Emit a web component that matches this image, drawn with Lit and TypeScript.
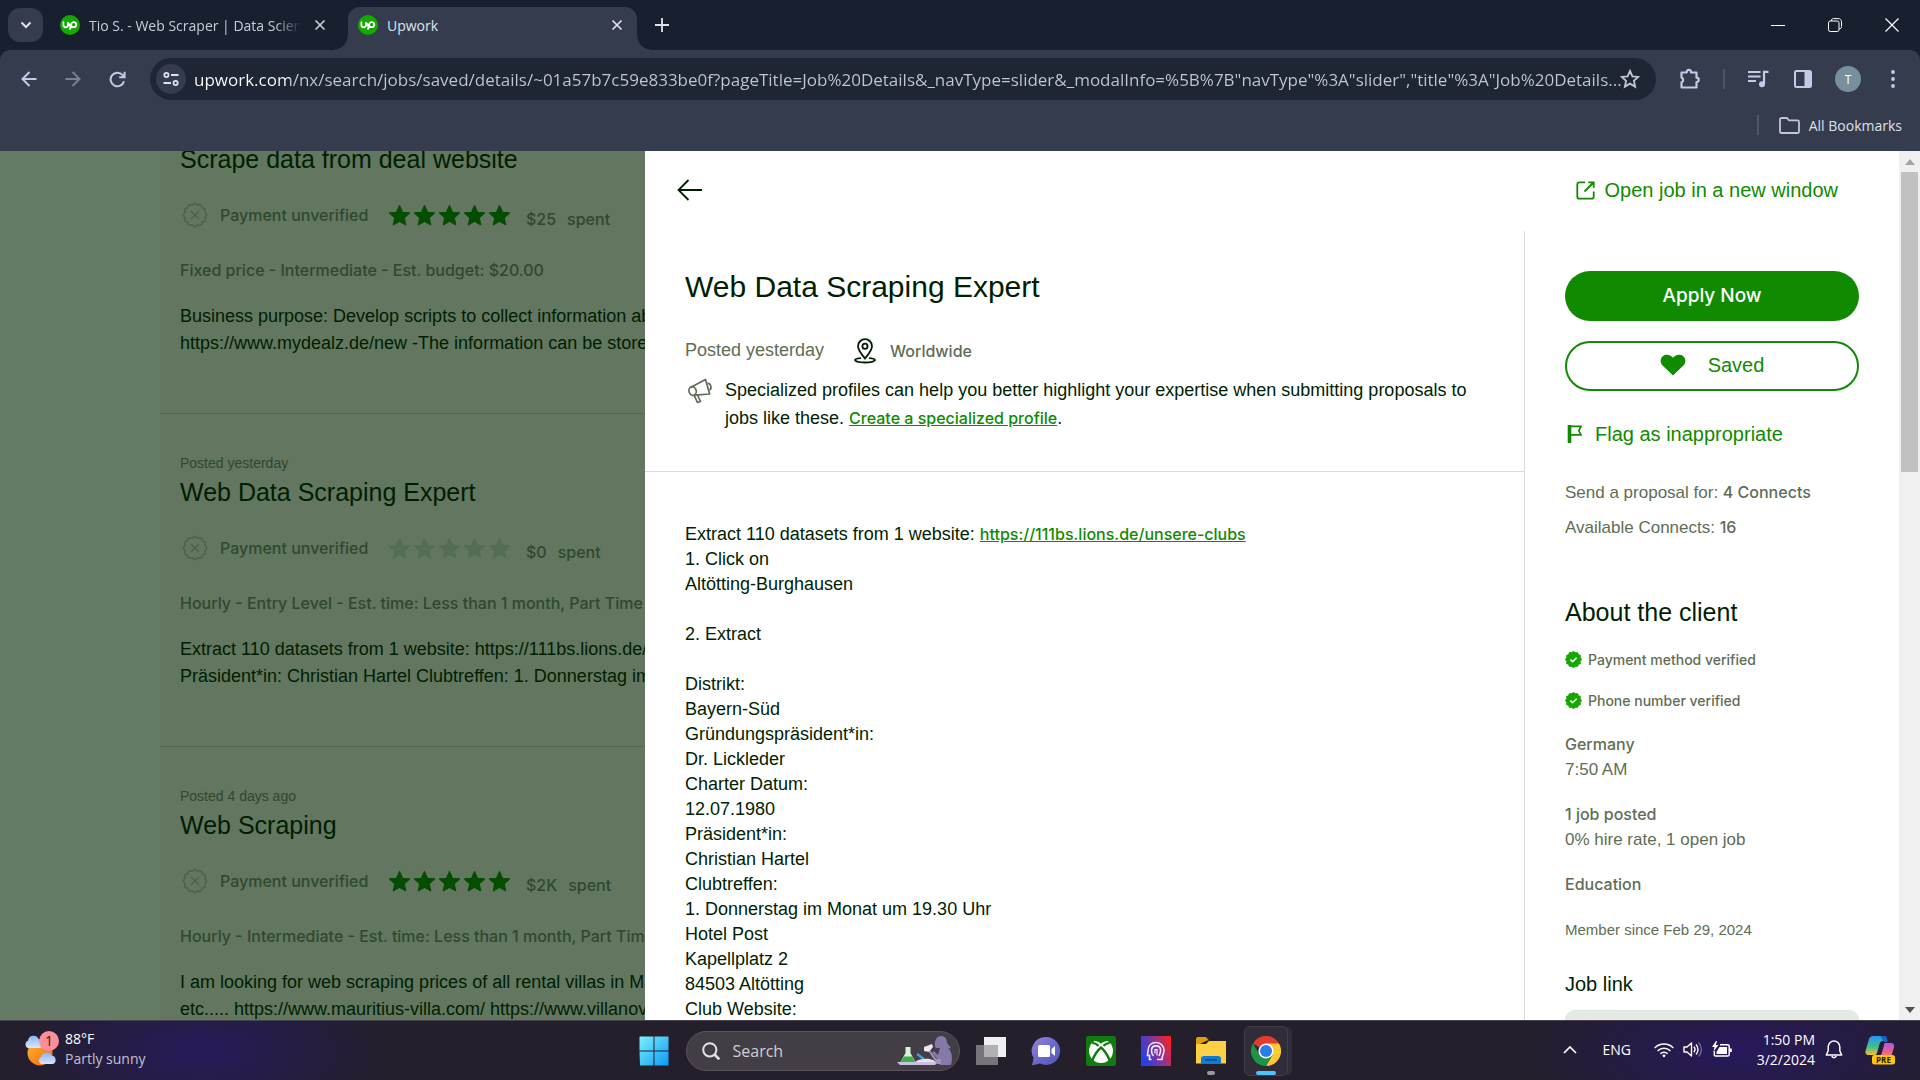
import { LitElement, html, css, nothing } from "lit";
import { customElement } from "lit/decorators.js";
import { classMap } from "lit/directives/class-map.js";

interface Job {
  posted: string;
  title: string;
  rated: boolean;
  spent: string;
  meta: string;
  lines: string[];
}

const JOBS: Job[] = [
  {
    posted: "",
    title: "Scrape data from deal website",
    rated: true,
    spent: "$25",
    meta: "Fixed price - Intermediate - Est. budget: $20.00",
    lines: [
      "Business purpose: Develop scripts to collect information about",
      "https://www.mydealz.de/new -The information can be stored",
    ],
  },
  {
    posted: "Posted yesterday",
    title: "Web Data Scraping Expert",
    rated: false,
    spent: "$0",
    meta: "Hourly - Entry Level - Est. time: Less than 1 month, Part Time",
    lines: [
      "Extract 110 datasets from 1 website: https://111bs.lions.de/unsere-clubs",
      "Präsident*in: Christian Hartel Clubtreffen: 1. Donnerstag im Monat",
    ],
  },
  {
    posted: "Posted 4 days ago",
    title: "Web Scraping",
    rated: true,
    spent: "$2K",
    meta: "Hourly - Intermediate - Est. time: Less than 1 month, Part Time",
    lines: [
      "I am looking for web scraping prices of all rental villas in Mauritius",
      "etc..... https://www.mauritius-villa.com/ https://www.villanovo.com",
    ],
  },
];

const DESCRIPTION = [
  "1. Click on",
  "Altötting-Burghausen",
  "",
  "2. Extract",
  "",
  "Distrikt:",
  "Bayern-Süd",
  "Gründungspräsident*in:",
  "Dr. Lickleder",
  "Charter Datum:",
  "12.07.1980",
  "Präsident*in:",
  "Christian Hartel",
  "Clubtreffen:",
  "1. Donnerstag im Monat um 19.30 Uhr",
  "Hotel Post",
  "Kapellplatz 2",
  "84503 Altötting",
  "Club Website:",
];

const URL_TEXT =
  'upwork.com/nx/search/jobs/saved/details/~01a57b7c59e833be0f?pageTitle=Job%20Details&_navType=slider&_modalInfo=%5B%7B"navType"%3A"slider","title"%3A"Job%20Details...';

const scallop = (r: number, depth: number, c: number, n: number) => {
  let d = "";
  for (let i = 0; i <= n * 8; i++) {
    const a = (i / (n * 8)) * Math.PI * 2;
    const k = r + depth * Math.cos(a * n);
    d += `${i ? "L" : "M"}${(c + k * Math.sin(a)).toFixed(2)} ${(c - k * Math.cos(a)).toFixed(2)}`;
  }
  return d + "Z";
};

const favicon = html`<svg width="20" height="20" viewBox="0 0 20 20" aria-hidden="true">
  <circle cx="10" cy="10" r="10" fill="#14a800" />
  <g fill="none" stroke="#fff" stroke-width="1.7" stroke-linecap="round">
    <path d="M3.4 7.2v2.900a2.300 2.300 0 0 0 4.600 0V7.200c1 2.500 2 4 3.300 5.200" />
    <path d="M10 14l1.300-4.800a2.500 2.500 0 1 1 2.500 3c-1.700 0-3-1.300-4-3" />
  </g>
</svg>`;

const closeX = html`<svg width="12" height="12" viewBox="0 0 12 12" aria-hidden="true">
  <path d="M1.500 1.500l9 9M10.500 1.500l-9 9" stroke="currentColor" stroke-width="1.700" fill="none" />
</svg>`;

const star = html`<svg width="23" height="23" viewBox="0 0 24 24" aria-hidden="true">
  <path
    d="M12 1.800l3 6.900 7.300.7-5.500 5 1.600 7.200L12 17.900l-6.400 3.700 1.600-7.200-5.500-5 7.300-.7z"
    fill="currentColor" stroke="currentColor" stroke-width="1.400" stroke-linejoin="round" />
</svg>`;

const unverified = html`<svg width="26" height="26" viewBox="0 0 26 26" aria-hidden="true">
  <path d=${scallop(11, 0.6, 13, 12)} fill="none" stroke="currentColor" stroke-width="1.500" />
  <path d="M9 9l8 8M17 9l-8 8" stroke="currentColor" stroke-width="1.500" />
</svg>`;

const verified = html`<svg width="17" height="17" viewBox="0 0 17 17" aria-hidden="true">
  <path d=${scallop(7.9, 0.5, 8.5, 12)} fill="#14a800" />
  <path d="M5.400 8.700l2.200 2 4-3.900" fill="none" stroke="#fff" stroke-width="1.600" />
</svg>`;

@customElement("app-root")
export class AppRoot extends LitElement {
  static styles = css`
    :host {
      display: flex;
      flex-direction: column;
      height: 100vh;
      overflow: hidden;
      font-family: "Liberation Sans", Arial, sans-serif;
      font-size: 17px;
      color: #001e00;
      background: #fff;
    }
    * { box-sizing: border-box; }
    svg { display: block; flex: none; }
    h1, h2, h3, p { margin: 0; font-weight: 400; }
    button { border: 0; padding: 0; background: none; color: inherit; font: inherit; cursor: pointer; }
    .medium { font-family: Inter, "Liberation Sans", sans-serif; font-weight: 500; font-size: 16px; }

    /* browser frame */
    .browser { flex: none; background: #182030; color: #dfe3ee; font: 14px "Open Sans", "Noto Sans", sans-serif; }
    .tabs { display: flex; align-items: center; height: 50px; padding-left: 8px; }
    .tabsearch { display: grid; place-items: center; width: 35px; height: 34px; border-radius: 12px; background: #343c4d; }
    .tab { display: flex; align-items: center; gap: 9px; width: 289px; height: 43px; margin-top: 7px; padding: 0 10px 7px; }
    .tab.idle { margin-left: 7px; padding-right: 9px; color: #c6ccda; }
    .tab.active { position: relative; margin-left: 9px; background: #343c4d; border-radius: 12px 12px 0 0; }
    .tab.active::before, .tab.active::after { content: ""; position: absolute; bottom: 0; width: 14px; height: 14px; }
    .tab.active::before { right: 100%; background: radial-gradient(circle at 0 0, transparent 13px, #343c4d 14px); }
    .tab.active::after { left: 100%; background: radial-gradient(circle at 100% 0, transparent 13px, #343c4d 14px); }
    .tabtitle { flex: 1; min-width: 0; overflow: hidden; white-space: nowrap; }
    .idle .tabtitle { -webkit-mask-image: linear-gradient(to right, #000 88%, transparent); mask-image: linear-gradient(to right, #000 88%, transparent); }
    .tabclose { display: grid; place-items: center; width: 20px; height: 20px; }
    .newtab { display: grid; place-items: center; width: 30px; height: 30px; margin-left: 10px; }
    .winbuttons { display: flex; margin-left: auto; color: #fff; }
    .winbuttons button { display: grid; place-items: center; width: 57px; height: 48px; }
    .toolbar { display: flex; align-items: center; height: 58px; padding: 0 19px 0 13px; background: #343c4d; border-radius: 10px 10px 0 0; color: #c5cae9; }
    .nav { display: flex; gap: 12px; margin-right: 17px; }
    .nav button, .actions button { display: grid; place-items: center; width: 32px; height: 32px; }
    .nav .off { color: #7b8192; }
    .omnibox { display: flex; flex: 1; align-items: center; height: 42px; padding: 0 16px 0 6px; border-radius: 21px; background: #1e2636; }
    .site { display: grid; place-items: center; width: 30px; height: 30px; border-radius: 15px; background: #343c4d; color: #dfe3ee; }
    .url { flex: 1; min-width: 0; height: 32px; padding: 0; margin: 0 -4px 0 8px; border: 0; outline: 0; font: 17px "Open Sans", "Noto Sans", sans-serif; background: linear-gradient(to right, #fff 96px, #c3c7d0 96px); -webkit-background-clip: text; background-clip: text; -webkit-text-fill-color: transparent; }
    .actions { display: flex; align-items: center; margin-left: 18px; gap: 13px; }
    .actions .rule { width: 2px; height: 20px; margin: 0 4px; background: #4d566b; }
    .avatar { display: grid; place-items: center; width: 26px; height: 26px; border-radius: 13px; background: #78909c; color: #fff; font-size: 12px; }
    .actions .more { margin-right: -8px; }
    .bookmarks { display: flex; align-items: center; justify-content: flex-end; gap: 10px; height: 43px; padding: 0 18px 9px 0; background: #343c4d; color: #dfe1e8; }
    .bookmarks .rule { width: 2px; height: 20px; margin-right: 10px; background: #4d566b; }
    .bookmarks button { display: flex; align-items: center; gap: 9px; }

    /* page */
    .page { display: grid; grid-template-columns: 645fr 1275fr; flex: 1; min-height: 0; }
    .behind { overflow: hidden; min-width: 0; padding-left: 160px; background: #667b66; }
    .list { margin-top: -71px; background: #627660; }
    .card { padding: 39px 0 56px 20px; border-top: 1px solid #566b55; white-space: nowrap; color: #001e00; }
    .posted { min-height: 20px; font-size: 14px; line-height: 20px; color: #2f492e; }
    .card h2 { font-size: 25px; line-height: 38px; }
    .facts { display: flex; align-items: center; height: 36px; margin-top: 19px; color: #2f492e; }
    .facts svg { color: #4a644a; }
    .facts .pay { margin-left: 12px; width: 153px; margin-right: 15px; }
    .badge { padding-left: 2px; }
    .stars { display: flex; gap: 2px; }
    .stars svg { color: #054d00; }
    .stars.none svg { color: #546e54; }
    .money { display: flex; gap: 11px; margin-left: 15px; padding-top: 7px; }
    .meta { margin-top: 24px; line-height: 27px; color: #2f492e; }
    .desc { margin-top: 19px; font-size: 18px; line-height: 27px; }

    .slider { display: grid; grid-template-columns: 1fr 21px; min-width: 0; min-height: 0; background: #fff; }
    .sheet { display: flex; flex-direction: column; min-width: 0; min-height: 0; overflow: hidden; }
    .sheethead { display: flex; flex: none; align-items: center; justify-content: space-between; height: 80px; padding: 0 61px 2px 32px; }
    a { color: #108a00; }
    .open { display: flex; align-items: center; gap: 10px; font-size: 20px; text-decoration: none; }
    .columns { display: grid; grid-template-columns: 1fr 375px; flex: 1; min-height: 0; }
    .job { min-width: 0; }
    .jobhead { padding: 36px 40px 39px; border-bottom: 1px solid #d5e0d5; }
    .jobhead h1 { font-size: 30px; line-height: 40px; }
    .where { display: flex; align-items: center; height: 36px; margin-top: 25px; font-size: 18px; color: #5e6d55; }
    .where .pin { margin: 2px 12px 0 28px; color: #001e00; }
    .where .medium { padding-top: 2px; }
    .notice { display: flex; gap: 11px; margin-top: 8px; font-size: 18px; line-height: 28px; color: #001e00; }
    .notice svg { margin: 2px 0 0 2px; color: #5e6d55; }
    .body { padding: 50px 40px 0; font-size: 18px; line-height: 25px; }
    .body p { min-height: 25px; }
    .side { padding: 40px 40px 0; border-left: 1px solid #d5e0d5; color: #5e6d55; line-height: 25px; }
    .apply, .saved { display: flex; align-items: center; justify-content: center; width: 100%; height: 50px; padding-bottom: 2px; border-radius: 25px; font-size: 20px; }
    .apply { background: #108a00; color: #fff; font-family: Inter, sans-serif; font-weight: 500; font-size: 19px; }
    .saved { gap: 22px; margin-top: 20px; border: 2px solid #108a00; color: #108a00; }
    .flag { display: flex; align-items: center; gap: 12px; height: 30px; margin-top: 28px; font-size: 20px; color: #108a00; }
    .connects { margin-top: 31px; }
    .available { margin-top: 10px; }
    .side h2 { margin-top: 55px; font-size: 25px; line-height: 35px; color: #001e00; }
    .check { display: flex; align-items: center; gap: 6px; height: 24px; margin-top: 17px; }
    .check .medium { font-size: 14px; }
    .fact { margin-top: 20px; }
    .since { margin-top: 23px; line-height: 20px; font-size: 15px; }
    .side h3 { margin-top: 30px; font-size: 20px; line-height: 28px; color: #001e00; }
    .link { width: 100%; height: 48px; margin-top: 12px; border: 1px solid #dbe5db; border-radius: 10px; background: #e4ebe4; }
    .scroll { display: flex; flex-direction: column; align-items: center; background: #f0f0f0; }
    .scroll .thumb { width: 17px; height: 300px; background: #c1c1c1; }
    .scroll svg { margin: 8px 0 7px; }
    .scroll .down { margin-top: auto; }

    /* taskbar */
    .taskbar { display: flex; flex: none; height: 60px; border-top: 1px solid #45424f; color: #fff; font: 14px/20px "Open Sans", "Noto Sans", sans-serif;
      background: radial-gradient(ellipse 200px 90px at 200px 30px, #271a5a, transparent), radial-gradient(ellipse 230px 90px at 1740px 30px, #28185c, transparent), #241f2a; }
    .weather { display: flex; flex: 1; align-items: center; gap: 6px; padding: 0 0 4px 24px; text-align: left; }
    .weather .sky { color: #c4c1cf; }
    .apps { display: flex; align-items: center; padding-left: 6px; }
    .apps button { position: relative; display: grid; place-items: center; width: 55px; height: 50px; }
    .apps .start { width: 30px; margin-right: 17px; }
    .search { display: flex; align-items: center; width: 274px; height: 40px; margin-right: 4px; padding: 0 6px 0 15px; border: 1px solid #5a525d; border-radius: 20px; background: #433e46; }
    .search input { flex: 1; min-width: 0; margin-left: 11px; padding: 0 2px; border: 0; outline: 0; background: none; color: #fff; font: 16px "Open Sans", sans-serif; }
    .search input::placeholder { color: #d0cdd3; opacity: 1; }
    .apps .front { width: 44px; margin-left: 5px; border: 1px solid #413d49; border-radius: 6px; background: #302c38; box-shadow: 5px 0 0 -1px #302c38; }
    .mark { position: absolute; bottom: 1px; width: 8px; height: 4px; border-radius: 2px; background: #9b98a0; }
    .front .mark { bottom: 0; width: 20px; background: #4cc2ff; }
    .tray { display: flex; flex: 1; align-items: center; justify-content: flex-end; padding: 0 24px 2px 0; }
    .tray .lang { margin: 0 23px 0 26px; }
    .tray .status { display: flex; align-items: center; gap: 9px; }
    .clock { width: 74px; margin: 0 10px 0 9px; white-space: nowrap; display: flex; flex-direction: column; align-items: flex-end; }
    .tray .copilot { margin-left: 22px; }
  `;

  private card(j: Job) {
    return html`<article class="card">
      <p class="posted">${j.posted || nothing}</p>
      <h2>${j.title}</h2>
      <div class="facts medium">
        <span class="badge">${unverified}</span>
        <span class="pay">Payment unverified</span>
        <span class=${classMap({ stars: true, none: !j.rated })}>${[1, 2, 3, 4, 5].map(() => star)}</span>
        <span class="money"><span>${j.spent}</span><span>spent</span></span>
      </div>
      <p class="meta medium">${j.meta}</p>
      <div class="desc">${j.lines.map((l) => html`<p>${l}</p>`)}</div>
    </article>`;
  }

  private browser() {
    return html`<header class="browser">
      <div class="tabs">
        <button class="tabsearch" aria-label="Search tabs">
          <svg width="12" height="8" viewBox="0 0 12 8"><path d="M1.500 1.500L6 6l4.500-4.500" fill="none" stroke="currentColor" stroke-width="2" /></svg>
        </button>
        <div class="tab idle">${favicon}<span class="tabtitle">Tio S. - Web Scraper | Data Scientist</span><button class="tabclose" aria-label="Close tab">${closeX}</button></div>
        <div class="tab active">${favicon}<span class="tabtitle">Upwork</span><button class="tabclose" aria-label="Close tab">${closeX}</button></div>
        <button class="newtab" aria-label="New tab">
          <svg width="14" height="14" viewBox="0 0 14 14"><path d="M7 0v14M0 7h14" stroke="currentColor" stroke-width="1.800" /></svg>
        </button>
        <div class="winbuttons">
          <button aria-label="Minimize"><svg width="14" height="14" viewBox="0 0 14 14"><path d="M0 7.500h14" stroke="currentColor" /></svg></button>
          <button aria-label="Restore"><svg width="14" height="14" viewBox="0 0 14 14" fill="none" stroke="currentColor"><rect x=".5" y="3" width="10.500" height="10.500" rx="1.800" /><path d="M3.200 3C3.200 1.500 4 .6 5.500.6h4.700c2 0 3.300 1.300 3.300 3.300v4.700c0 1.500-.9 2.300-2.400 2.300" /></svg></button>
          <button aria-label="Close"><svg width="14" height="14" viewBox="0 0 14 14"><path d="M.5.5l13 13M13.500.5l-13 13" stroke="currentColor" stroke-width="1.200" /></svg></button>
        </div>
      </div>
      <div class="toolbar">
        <div class="nav">
          <button aria-label="Back"><svg width="16" height="16" viewBox="0 0 16 16" fill="none" stroke="currentColor" stroke-width="2"><path d="M15.500 8H2M8.500 1L1.500 8l7 7" /></svg></button>
          <button class="off" aria-label="Forward"><svg width="16" height="16" viewBox="0 0 16 16" fill="none" stroke="currentColor" stroke-width="2"><path d="M.5 8H14M7.500 1l7 7-7 7" /></svg></button>
          <button aria-label="Reload"><svg width="17" height="17" viewBox="0 0 17 17" fill="none" stroke="currentColor" stroke-width="2"><path d="M15 10.200A6.800 6.800 0 1 1 13.500 3.900L15.500 6M15.600.8V6.200H10.200" /></svg></button>
        </div>
        <div class="omnibox">
          <span class="site"><svg width="16" height="14" viewBox="0 0 16 14" fill="none" stroke="currentColor" stroke-width="1.800"><circle cx="3.400" cy="3" r="2.100" /><path d="M8 3h7.500M.5 11H8" /><circle cx="12.600" cy="11" r="2.100" /></svg></span>
          <input class="url" type="text" aria-label="Address" .value=${URL_TEXT} />
          <button aria-label="Bookmark this page"><svg width="20" height="20" viewBox="0 0 20 20"><path d="M10 1.900l2.400 5.400 5.900.6-4.400 3.900 1.200 5.800-5.100-3-5.100 3 1.200-5.800L1.700 7.900l5.900-.6z" fill="none" stroke="#c3c7d0" stroke-width="1.800" /></svg></button>
        </div>
        <div class="actions">
          <button aria-label="Extensions"><svg width="22" height="22" viewBox="0 0 22 22"><path d="M2.500 4.500h5.200a2.200 2.200 0 1 1 4.300 0h5.500v5.200a2.200 2.200 0 1 1 0 4.400v5.400h-15v-5.300a2.400 2.400 0 0 0 0-4.600z" fill="none" stroke="currentColor" stroke-width="2.200" stroke-linejoin="round" /></svg></button>
          <span class="rule"></span>
          <button aria-label="Media controls"><svg width="21" height="18" viewBox="0 0 21 18"><path d="M0 2h12.500M0 6.500h12.500M0 11h8" stroke="currentColor" stroke-width="2" /><path d="M16 14V1.800h4.500" fill="none" stroke="currentColor" stroke-width="2.200" /><circle cx="14" cy="14.200" r="3" fill="currentColor" /></svg></button>
          <button aria-label="Side panel"><svg width="18" height="18" viewBox="0 0 18 18"><rect x="1" y="1" width="16" height="16" rx="1.500" fill="none" stroke="currentColor" stroke-width="2" /><path d="M10.500 1H17v16h-6.500z" fill="currentColor" /></svg></button>
          <button aria-label="Profile"><span class="avatar">T</span></button>
          <button class="more" aria-label="Menu"><svg width="4" height="18" viewBox="0 0 4 18" fill="currentColor"><circle cx="2" cy="2" r="1.900" /><circle cx="2" cy="9" r="1.900" /><circle cx="2" cy="16" r="1.900" /></svg></button>
        </div>
      </div>
      <div class="bookmarks">
        <span class="rule"></span>
        <button><svg width="21" height="17" viewBox="0 0 21 17"><path d="M1 2.500C1 1.700 1.700 1 2.500 1h5.300l2.200 2.400h8.500c.8 0 1.500.7 1.500 1.500v9.600c0 .8-.7 1.500-1.500 1.500h-16C1.700 16 1 15.300 1 14.500z" fill="none" stroke="#c3c7d0" stroke-width="1.800" /></svg>All Bookmarks</button>
      </div>
    </header>`;
  }

  private slider() {
    return html`<section class="slider">
      <div class="sheet">
        <div class="sheethead">
          <button aria-label="Go back"><svg width="26" height="24" viewBox="0 0 26 24"><path d="M25 12H1.500M11.500 2L1.500 12l10 10" fill="none" stroke="#001e00" stroke-width="1.800" /></svg></button>
          <a class="open" href="#job"><svg width="19" height="19" viewBox="0 0 19 19" fill="none" stroke="#108a00" stroke-width="1.800"><path d="M9 1.300H3.200c-1.200 0-1.900.7-1.900 1.900v12.600c0 1.200.7 1.900 1.900 1.900h12.600c1.200 0 1.900-.7 1.900-1.900V10.500" /><path d="M12.300 1.300h5.400v5.400M17.500 1.500L8.500 10.500" /></svg>Open job in a new window</a>
        </div>
        <div class="columns">
          <div class="job">
            <div class="jobhead">
              <h1>Web Data Scraping Expert</h1>
              <div class="where">
                <span>Posted yesterday</span>
                <svg class="pin" width="26" height="26" viewBox="0 0 26 26" fill="none" stroke="currentColor" stroke-width="1.800"><path d="M13 20.500C10 16.500 6 12.300 6 8.200a7 7 0 0 1 14 0c0 4.100-4 8.300-7 12.300z" /><circle cx="13" cy="8.300" r="2.600" /><path d="M8.300 20.100c-3.400.4-5.300 1.100-5.300 2 0 1.400 4.500 2.400 10 2.400s10-1 10-2.400c0-.9-1.900-1.600-5.300-2" stroke-linecap="round" /></svg>
                <span class="medium">Worldwide</span>
              </div>
              <div class="notice">
                <svg width="27" height="26" viewBox="0 0 27 26" fill="none" stroke="currentColor" stroke-width="1.700" stroke-linejoin="round"><path d="M3.500 9.500L18.500 1.500l4.200 14.500-14.500 1.200" /><ellipse cx="5.600" cy="13" rx="3.600" ry="4.400" transform="rotate(-15 5.600 13)" /><path d="M7 17.200l3.500 7.300 3-1L10.500 17M20.500 5.500c3-.5 5 5 2 6.600" /></svg>
                <p>Specialized profiles can help you better highlight your expertise when submitting proposals to jobs like these. <a class="medium" href="#profile">Create a specialized profile</a>.</p>
              </div>
            </div>
            <div class="body">
              <p>Extract 110 datasets from 1 website: <a class="medium" href="#clubs">https://111bs.lions.de/unsere-clubs</a></p>
              ${DESCRIPTION.map((l) => html`<p>${l || nothing}</p>`)}
            </div>
          </div>
          <aside class="side">
            <button class="apply">Apply Now</button>
            <button class="saved"><svg width="26" height="22" viewBox="0 0 26 22"><path d="M13 21.500L2.600 11.600C-.2 8.700.1 4.400 2.800 2.200 5.800-.2 10.200.3 13 3.800 15.800.3 20.200-.2 23.200 2.200c2.700 2.200 3 6.500.2 9.400z" fill="#108a00" /></svg>Saved</button>
            <button class="flag"><svg width="18" height="18" viewBox="0 0 18 18" fill="none" stroke="#108a00"><path d="M4.500 0v18" stroke-width="3.600" /><path d="M5 1.300h11L13.800 5.800 16 9.800H5" stroke-width="1.700" /></svg>Flag as inappropriate</button>
            <p class="connects">Send a proposal for: <span class="medium">4 Connects</span></p>
            <p class="available">Available Connects: <span class="medium">16</span></p>
            <h2>About the client</h2>
            <div class="check">${verified}<span class="medium">Payment method verified</span></div>
            <div class="check">${verified}<span class="medium">Phone number verified</span></div>
            <div class="fact"><p class="medium">Germany</p><p>7:50 AM</p></div>
            <div class="fact"><p class="medium">1 job posted</p><p>0% hire rate, 1 open job</p></div>
            <div class="fact"><p class="medium">Education</p></div>
            <p class="since">Member since Feb 29, 2024</p>
            <h3>Job link</h3>
            <input class="link" type="text" aria-label="Job link" readonly />
          </aside>
        </div>
      </div>
      <div class="scroll" aria-hidden="true">
        <svg width="10" height="6" viewBox="0 0 10 6"><path d="M0 6L5 0l5 6z" fill="#a3a3a3" /></svg>
        <div class="thumb"></div>
        <svg class="down" width="10" height="6" viewBox="0 0 10 6"><path d="M0 0h10L5 6z" fill="#505050" /></svg>
      </div>
    </section>`;
  }

  private taskbar() {
    return html`<footer class="taskbar">
      <button class="weather">
        <svg width="35" height="36" viewBox="0 0 35 36">
          <defs>
            <linearGradient id="sun" x1="0" y1="0" x2="1" y2="1"><stop offset="0" stop-color="#fdb828" /><stop offset="1" stop-color="#f0641e" /></linearGradient>
            <linearGradient id="cloud" x1="0" y1="0" x2="0" y2="1"><stop offset="0" stop-color="#8db4ee" /><stop offset="1" stop-color="#d9e6fb" /></linearGradient>
          </defs>
          <circle cx="16" cy="22" r="12.500" fill="url(#sun)" />
          <path d="M4 17a4 4 0 0 1 0-7.500 5.500 5.500 0 0 1 10.500-1.500 5 5 0 0 1 1.500 9z" fill="url(#cloud)" />
          <path d="M17 33a4 4 0 0 1 0-7 6 6 0 0 1 11-1.500 4.500 4.500 0 0 1 1 8.500z" fill="url(#cloud)" />
          <circle cx="25" cy="10" r="10" fill="#fd8e97" />
          <text x="25" y="15" text-anchor="middle" font-size="14" fill="#2a1a20">1</text>
        </svg>
        <span><div>88°F</div><div class="sky">Partly sunny</div></span>
      </button>
      <div class="apps">
        <button class="start" aria-label="Start"><svg width="30" height="30" viewBox="0 0 30 30"><defs><linearGradient id="win" x1="0" y1="0" x2="1" y2="1"><stop offset="0" stop-color="#7cf1ff" /><stop offset="1" stop-color="#0c98f6" /></linearGradient></defs><path d="M1 .5h13.500v14H.5V1zM15.500.5h14v14h-14zM.5 15.500h14v14H1zM15.500 15.500h14v14h-14z" fill="url(#win)" /></svg></button>
        <div class="search">
          <svg width="18" height="18" viewBox="0 0 18 18" fill="none" stroke="#e4e2e6"><circle cx="7.800" cy="7.800" r="6.600" stroke-width="2" /><path d="M12.500 12.500l4.800 4.800" stroke-width="2.600" /></svg>
          <input type="text" aria-label="Search" placeholder="Search" />
          <svg width="56" height="32" viewBox="0 0 56 32">
            <path d="M0 27h41l-3 3H3z" fill="#c9c0e2" />
            <path d="M8.500 12h5v6l5 9h-15l5-9z" fill="#d7f0e2" /><path d="M6.800 21.500h8.400l3 5.500H3.800z" fill="#3fae49" />
            <path d="M20 19l7 5" stroke="#35a7e8" stroke-width="2.200" />
            <path d="M18 27c5-4 13-4 18-2l3 2z" fill="#e8dff4" />
            <path d="M38 12c-1-7 2-11 6-11s6 3 6 7l4 5c-1 1-3 0-4-1 5 4 6 11 4 18H43l-2-5-6-7 2-2 4 4 2-7c-3 0-4 0-5-1z" fill="#8579a8" />
            <path d="M27 12l8-3 1 3-4 5-5-1z" fill="#efe6f2" />
            <path d="M33 15l6 9h5v5H40l-8-12z" fill="#a293bd" />
          </svg>
        </div>
        <button aria-label="Task view"><svg width="30" height="28" viewBox="0 0 30 28"><rect x="8" width="22" height="20" fill="#f0f0f1" /><rect y="8" width="22" height="20" fill="#777579" /><rect x="8" y="8" width="14" height="12" fill="#b1b0b2" /></svg></button>
        <button aria-label="Chat"><svg width="30" height="30" viewBox="0 0 30 30"><defs><linearGradient id="chat" x1="0" y1="0" x2="1" y2="1"><stop offset="0" stop-color="#9a85d8" /><stop offset=".5" stop-color="#6a69cc" /><stop offset="1" stop-color="#5156b8" /></linearGradient></defs><path d="M15 1a14 14 0 1 1-6 26.600L1 29.500l1.600-7.500A14 14 0 0 1 15 1z" fill="url(#chat)" /><rect x="7" y="9" width="12" height="12" rx="1.500" fill="#fff" /><path d="M20.500 13l3.500-3v10l-3.500-3z" fill="#fff" /></svg></button>
        <button aria-label="Xbox"><svg width="30" height="30" viewBox="0 0 30 30"><rect width="30" height="30" rx="2.500" fill="#107c10" /><circle cx="15" cy="15" r="12" fill="#fff" /><path d="M15 7.800C12.500 5.700 9.500 4.700 7.300 5.200 11 2 19 2 22.700 5.200 20.500 4.700 17.500 5.700 15 7.800z" fill="#107c10" /><path d="M6 25C8.500 19 12.500 13.500 15 11.500 17.500 13.500 21.500 19 24 25M12.600 9.800C10.500 8 8 6.800 6.200 7.200M17.400 9.800C19.500 8 22 6.800 23.800 7.200" fill="none" stroke="#107c10" stroke-width="2.400" /></svg></button>
        <button aria-label="Assistant"><svg width="30" height="30" viewBox="0 0 30 30"><defs><linearGradient id="head" x1="0" y1=".6" x2="1" y2=".2"><stop offset="0" stop-color="#2340ea" /><stop offset=".55" stop-color="#8d3494" /><stop offset="1" stop-color="#fa2120" /></linearGradient></defs><path d="M0 0h30v30H0z" fill="url(#head)" /><g fill="none" stroke="#f5e6ff" stroke-width="1.600"><path d="M10.500 23.500h-2V19.500H6.500l.5-4.500C7 9.500 10.300 6.500 15 6.500s8 3.500 8 8c0 3.500-2 4.500-2 9h-5" /><path d="M12.500 20c-1.800-1.500-2-3.500-2-5.500 0-2.800 1.800-4.600 4.500-4.600s4.600 1.800 4.600 4.500-1.200 3.600-1.600 5.600" /><path d="M14 17.500v-4h2v6" stroke-width="1.200" /></g></svg></button>
        <button aria-label="File Explorer"><svg width="30" height="27" viewBox="0 0 30 27"><path d="M0 2C0 1 .8 0 2 0h8l3 3.500h-2L0 9z" fill="#e09c11" /><path d="M0 7h10l3-3h17v22.500H0z" fill="#fdcf45" /><path d="M5 27v-5c0-2 1-3 3-3h14c2 0 3 1 3 3v5z" fill="#0f7bd1" /><path d="M9 22.800h12" stroke="#0b4b8c" stroke-width="1.500" /></svg><span class="mark"></span></button>
        <button class="front" aria-label="Chrome"><svg width="30" height="30" viewBox="0 0 30 30">
          <path d="M15 15L2 7.500A15 15 0 0 1 28 7.500z" fill="#e33b2e" /><path d="M15 7.500h13A15 15 0 0 1 15 30l6.500-11.200z" fill="#fcc934" /><path d="M2 7.500l6.500 11.300L15 22.500 15 30A15 15 0 0 1 2 7.500z" fill="#1e9449" /><path d="M15 30l6.500-11.300-6.500 3z" fill="#1e9449" />
          <circle cx="15" cy="15" r="7.600" fill="#fff" /><circle cx="15" cy="15" r="6" fill="#2b7de9" /></svg><span class="mark"></span></button>
      </div>
      <div class="tray">
        <svg width="14" height="8" viewBox="0 0 14 8"><path d="M1 7l6-6 6 6" fill="none" stroke="#fff" stroke-width="1.700" /></svg>
        <span class="lang">ENG</span>
        <span class="status">
          <svg width="20" height="16" viewBox="0 0 20 16" fill="none" stroke="#fff" stroke-width="1.500"><path d="M.7 6a13 13 0 0 1 18.600 0M3.600 9a9 9 0 0 1 12.800 0M6.400 11.800a5 5 0 0 1 7.200 0" /><circle cx="10" cy="13.800" r="1.400" fill="#fff" stroke="none" /></svg>
          <svg width="20" height="17" viewBox="0 0 20 17" fill="none" stroke="#fff" stroke-width="1.400"><path d="M1 6h3l4.500-4v13L4 11H1z" stroke-linejoin="round" /><path d="M10.800 5.800a4 4 0 0 1 0 5.400M13 3.600a7 7 0 0 1 0 9.800" /><path d="M15.500 1.500a10 10 0 0 1 0 14" stroke="#6f6795" /></svg>
          <svg width="20" height="17" viewBox="0 0 20 17"><path d="M8 3.700h7.500c1 0 1.700.7 1.700 1.700v8c0 1-.7 1.700-1.700 1.700H4c-1 0-1.700-.7-1.700-1.700V10" fill="none" stroke="#fff" stroke-width="1.500" /><path d="M18 7.500h1.800v3.500H18z" fill="#fff" /><path d="M7.500 6H15v7H4.500v-2z" fill="#fff" /><path d="M4 0L0 6h2.500L1.500 10.500 6.500 4H3.800L5 0z" fill="#fff" /></svg>
        </span>
        <div class="clock"><span>1:50 PM</span><span>3/2/2024</span></div>
        <svg width="18" height="19" viewBox="0 0 18 19" fill="none" stroke="#fff" stroke-width="1.500"><path d="M9 1a5.800 5.800 0 0 0-5.800 5.800v4L1.300 15h15.400l-1.900-4.200v-4A5.800 5.800 0 0 0 9 1z" stroke-linejoin="round" /><path d="M6.800 16a2.300 2.300 0 0 0 4.400 0" /></svg>
        <svg class="copilot" width="31" height="30" viewBox="0 0 31 30">
          <defs><linearGradient id="cpa" x1="0" y1="0" x2="0" y2="1"><stop offset="0" stop-color="#2196f3" /><stop offset=".6" stop-color="#48bf8a" /><stop offset="1" stop-color="#f4c32c" /></linearGradient><linearGradient id="cpb" x1="0" y1="0" x2="0" y2="1"><stop offset="0" stop-color="#a65be8" /><stop offset=".6" stop-color="#ee5c8f" /><stop offset="1" stop-color="#f58a4c" /></linearGradient></defs>
          <path d="M8 1h11c2.500 0 2.800 2 3.500 5h-4.500c-2 0-3 1-3.500 3l-2.500 9c-.5 1.500-1.500 2-3 2H3.500C.5 20 0 17.500.8 15L4 4c.6-2 2-3 4-3z" fill="url(#cpa)" />
          <path d="M20 8h6c3 0 3.600 2.500 2.800 5L27 19c-.6 2-2 3-4 3H13c2.500 0 3-1 3.500-3l2.300-8c.3-1.500.4-3 1.200-3z" fill="url(#cpb)" />
          <path d="M15 1h4c2.500 0 2.800 2 3.500 6h-3c-2 0-1.500-4-4.500-6z" fill="#1b5fc4" />
          <rect x="7" y="20" width="23" height="9.500" rx="2.500" fill="#ffc40c" />
          <text x="18.500" y="28" text-anchor="middle" font-size="8" font-weight="700" fill="#231c00">PRE</text>
        </svg>
      </div>
    </footer>`;
  }

  render() {
    return html`${this.browser()}
      <main class="page">
        <div class="behind"><div class="list">${JOBS.map((j) => this.card(j))}</div></div>
        ${this.slider()}
      </main>
      ${this.taskbar()}`;
  }
}
